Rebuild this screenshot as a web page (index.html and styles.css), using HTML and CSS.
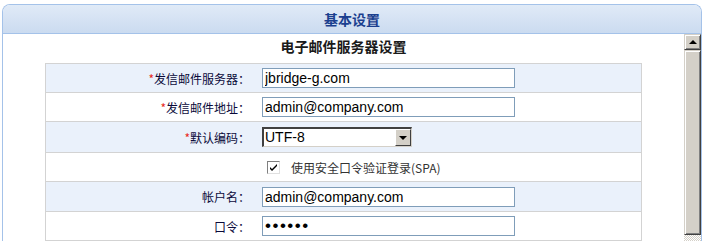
FILE: index.html
```html
<!DOCTYPE html>
<html lang="zh-CN">
<head>
  <meta charset="UTF-8">
  <title>基本设置</title>
  <link rel="stylesheet" href="styles.css">
</head>
<body>
  <div class="panel">
    <div class="panel-head">基本设置</div>
    <div class="panel-body">
      <div class="content">
        <h2 class="section-title">电子邮件服务器设置</h2>
        <table class="form-table">
          <tr class="alt">
            <td class="label"><span class="req">*</span>发信邮件服务器：</td>
            <td class="field"><input type="text" class="txt" value="jbridge-g.com"></td>
          </tr>
          <tr>
            <td class="label"><span class="req">*</span>发信邮件地址：</td>
            <td class="field"><input type="text" class="txt" value="admin@company.com"></td>
          </tr>
          <tr class="alt tall">
            <td class="label"><span class="req">*</span>默认编码：</td>
            <td class="field">
              <div class="select">
                <span class="select-value">UTF-8</span>
                <span class="select-btn"><span class="arrow-down"></span></span>
              </div>
            </td>
          </tr>
          <tr>
            <td class="label"></td>
            <td class="field">
              <label class="check">
                <span class="check-box">
                  <svg width="9" height="9" viewBox="0 0 9 9"><path d="M1 4 L3 6 L8 1 L8 3 L3 8 L1 6 Z" fill="#000"/></svg>
                </span>
                使用安全口令验证登录(SPA)
              </label>
            </td>
          </tr>
          <tr class="alt mid">
            <td class="label">帐户名：</td>
            <td class="field"><input type="text" class="txt" value="admin@company.com"></td>
          </tr>
          <tr>
            <td class="label">口令：</td>
            <td class="field"><input type="password" class="txt pwd" value="123456"></td>
          </tr>
        </table>
      </div>
      <div class="scrollbar">
        <div class="sb-btn"><span class="arrow-up"></span></div>
        <div class="sb-thumb"></div>
        <div class="sb-track"></div>
      </div>
    </div>
  </div>
</body>
</html>
```
FILE: styles.css
```css
body {
  margin: 0;
  background: #fff;
  font-family: "Noto Sans CJK SC", "Liberation Sans", sans-serif;
  font-size: 12px;
}

.panel {
  margin: 4px 1px 0 2px;
  border: 1px solid #a4c2e9;
  border-bottom: none;
  border-radius: 8px 8px 0 0;
  overflow: hidden;
}

.panel-head {
  height: 28px;
  line-height: 28px;
  text-align: center;
  font-size: 14px;
  font-weight: bold;
  color: #1b3f8f;
  background: linear-gradient(#e0eaf7, #cbdbf0);
  border-bottom: 1px solid #a4c2e9;
}

.panel-body {
  display: flex;
  height: 207px;
  overflow: hidden;
}

.content {
  flex: 1;
}

.section-title {
  margin: 1px 0 5px;
  height: 23px;
  line-height: 23px;
  text-align: center;
  font-size: 14px;
  font-weight: bold;
  color: #1a1a1a;
}

.form-table {
  width: 597px;
  margin: 0 auto;
  border-collapse: collapse;
  border: 1px solid #d3d3d3;
}

.form-table td {
  height: 28px;
  padding: 0;
  border-bottom: 1px solid #d3d3d3;
}

.form-table tr.tall td {
  height: 30px;
}

.form-table tr.mid td {
  height: 29px;
}

.form-table tr.alt td {
  background: #eaf1fb;
}

.label {
  width: 204px;
  padding-right: 5px !important;
  text-align: right;
  color: #0a0a3a;
  white-space: nowrap;
}

.req {
  color: #e8281e;
}

.field {
  padding-left: 7px !important;
}

.txt {
  box-sizing: border-box;
  width: 253px;
  height: 20px;
  margin: 0;
  padding: 0 2px;
  border: 1px solid #7f9db9;
  font-family: "Liberation Sans", Arial, sans-serif;
  font-size: 14px;
  color: #000;
  background: #fff;
  display: block;
}

.pwd {
  font-size: 17px;
  letter-spacing: 1.5px;
}

.select {
  box-sizing: border-box;
  width: 150px;
  height: 20px;
  display: flex;
  border-top: 2px solid #404040;
  border-left: 2px solid #404040;
  border-right: 1px solid #d4d0c8;
  border-bottom: 1px solid #d4d0c8;
  background: #fff;
}

.select-value {
  flex: 1;
  padding-left: 1px;
  line-height: 17px;
  font-family: "Liberation Sans", Arial, sans-serif;
  font-size: 14px;
}

.select-btn {
  box-sizing: border-box;
  width: 16px;
  background: #d4d0c8;
  border-top: 1px solid #fff;
  border-left: 1px solid #fff;
  border-right: 1px solid #404040;
  border-bottom: 1px solid #404040;
  display: flex;
  align-items: center;
  justify-content: center;
}

.arrow-down {
  width: 0;
  height: 0;
  border-left: 4px solid transparent;
  border-right: 4px solid transparent;
  border-top: 4px solid #000;
}

.check {
  display: flex;
  align-items: center;
  gap: 11px;
  padding-left: 5px;
  color: #333;
}

.check-box {
  box-sizing: border-box;
  width: 13px;
  height: 13px;
  border-top: 1px solid #808080;
  border-left: 1px solid #808080;
  border-right: 1px solid #e0e0e0;
  border-bottom: 1px solid #e0e0e0;
  background: #fff;
  display: flex;
  align-items: center;
  justify-content: center;
}

.scrollbar {
  width: 17px;
  display: flex;
  flex-direction: column;
}

.sb-btn {
  box-sizing: border-box;
  height: 16px;
  background: #d4d0c8;
  border-top: 1px solid #d4d0c8;
  border-left: 1px solid #d4d0c8;
  border-right: 1px solid #404040;
  border-bottom: 1px solid #404040;
  box-shadow: inset 1px 1px 0 #fff, inset -1px -1px 0 #808080;
  display: flex;
  align-items: center;
  justify-content: center;
}

.arrow-up {
  width: 0;
  height: 0;
  border-left: 4px solid transparent;
  border-right: 4px solid transparent;
  border-bottom: 4px solid #000;
}

.sb-thumb {
  box-sizing: border-box;
  height: 185px;
  background: #d4d0c8;
  border-top: 1px solid #d4d0c8;
  border-left: 1px solid #d4d0c8;
  border-right: 1px solid #404040;
  border-bottom: 1px solid #404040;
  box-shadow: inset 1px 1px 0 #fff, inset -1px -1px 0 #808080;
}

.sb-track {
  flex: 1;
  background: repeating-conic-gradient(#d4d0c8 0 25%, #fff 0 50%) 0 0 / 2px 2px;
}
```
